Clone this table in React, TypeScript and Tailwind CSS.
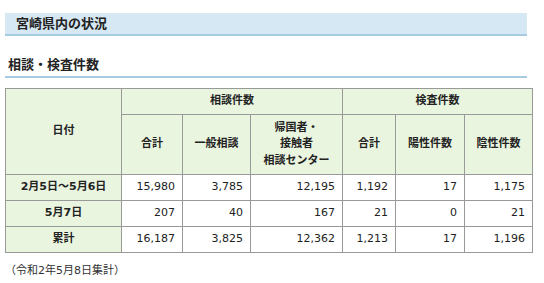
import React from "react";

const jp = { fontFamily: '"DejaVu Sans", "Noto Sans CJK JP", sans-serif' };

type Row = { label: string; values: string[] };

const rows: Row[] = [
  { label: "2月5日～5月6日", values: ["15,980", "3,785", "12,195", "1,192", "17", "1,175"] },
  { label: "5月7日", values: ["207", "40", "167", "21", "0", "21"] },
  { label: "累計", values: ["16,187", "3,825", "12,362", "1,213", "17", "1,196"] },
];

const th = "border border-[#999999] bg-[#eaf5e0] font-bold text-center align-middle p-0";
const td = "border border-[#999999] text-right pr-[7px] h-[26px] p-0";

const App: React.FC = () => {
  return (
    <div className="w-[544px] h-[283px] bg-white text-[#222222] overflow-hidden" style={jp}>
      <div className="pt-[13px] px-[5px] w-[532px]">
        {/* section title bar */}
        <div className="h-[23px] bg-[#d6e8f3] border-b-2 border-[#a7cbe0] pl-[11px] text-[13px] font-bold leading-[22px]">
          宮崎県内の状況
        </div>

        {/* sub heading */}
        <div className="mt-[19px] pl-[3px] text-[13px] font-bold leading-[20px] pb-[1px] border-b-2 border-[#a7cbe0]">
          相談・検査件数
        </div>

        <table className="mt-[10px] border-collapse w-[527px] table-fixed text-[11px]">
          <colgroup>
            <col className="w-[116px]" />
            <col className="w-[61px]" />
            <col className="w-[68px]" />
            <col className="w-[92px]" />
            <col className="w-[53px]" />
            <col className="w-[69px]" />
            <col className="w-[68px]" />
          </colgroup>
          <thead>
            <tr className="h-[26px]">
              <th rowSpan={2} className={th}>日付</th>
              <th colSpan={3} className={th}>相談件数</th>
              <th colSpan={3} className={th}>検査件数</th>
            </tr>
            <tr className="h-[60px]">
              <th className={th}>合計</th>
              <th className={th}>一般相談</th>
              <th className={`${th} leading-[16.5px]`}>
                帰国者・
                <br />
                接触者
                <br />
                相談センター
              </th>
              <th className={th}>合計</th>
              <th className={th}>陽性件数</th>
              <th className={th}>陰性件数</th>
            </tr>
          </thead>
          <tbody>
            {rows.map((r) => (
              <tr key={r.label}>
                <td className="border border-[#999999] bg-[#eaf5e0] font-bold text-center h-[26px] p-0">
                  {r.label}
                </td>
                {r.values.map((v, i) => (
                  <td key={i} className={td}>
                    {v}
                  </td>
                ))}
              </tr>
            ))}
          </tbody>
        </table>

        <div className="mt-[10px] text-[11px] text-[#333333] leading-[16px]">（令和2年5月8日集計）</div>
      </div>
    </div>
  );
};

export default App;
